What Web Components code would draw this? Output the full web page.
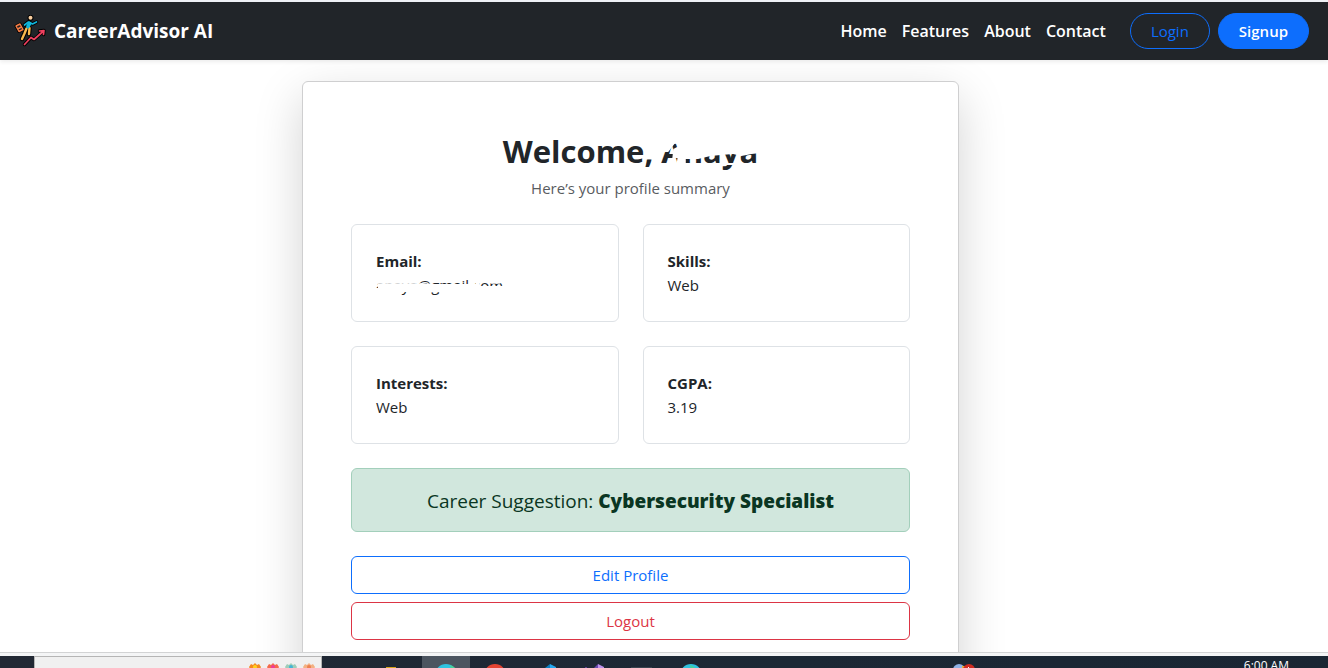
<!DOCTYPE html>
<html lang="en">
<head>
<meta charset="utf-8">
<title>CareerAdvisor AI</title>
<style>
html, body { margin: 0; height: 100%; }
body { display: flex; flex-direction: column; overflow: hidden; background: #fff; color: #212529; font: 15px/24px "Open Sans", "Noto Sans", sans-serif; }
main { flex: 1; min-height: 0; overflow: hidden; padding: 21px 67px 0 0; }
</style>
</head>
<body>
<site-nav>
  <nav-link href="#home">Home</nav-link>
  <nav-link href="#features">Features</nav-link>
  <nav-link href="#about">About</nav-link>
  <nav-link href="#contact">Contact</nav-link>
  <pill-button slot="actions">Login</pill-button>
  <pill-button slot="actions" solid>Signup</pill-button>
</site-nav>
<main>
  <profile-card>
    <info-box label="Email:"><redacted-text kind="email">anaya@gmail.com</redacted-text></info-box>
    <info-box label="Skills:">Web</info-box>
    <info-box label="Interests:">Web</info-box>
    <info-box label="CGPA:">3.19</info-box>
    <career-alert slot="footer">Cybersecurity Specialist</career-alert>
    <block-button slot="footer">Edit Profile</block-button>
    <block-button slot="footer" danger>Logout</block-button>
  </profile-card>
</main>
<task-bar></task-bar>
<script>
function define(name, html) {
  customElements.define(name, class extends HTMLElement {
    constructor() {
      super();
      this.attachShadow({ mode: 'open' }).innerHTML = '<style>*{box-sizing:border-box}</style>' + html(this);
    }
  });
}

define('site-nav', () => `<style>
:host { display: block; flex: none; position: relative; z-index: 1; border-top: 2px solid #eef1f5; background: #212529; box-shadow: 0 2px 4px rgba(0,0,0,.075); }
nav { display: flex; align-items: center; height: 58px; padding: 0 19px 0 14px; }
.brand { display: flex; align-items: center; gap: 7px; color: #fff; font-size: 19px; font-weight: 700; line-height: 30px; text-decoration: none; white-space: nowrap; }
.links { display: flex; gap: 15px; margin-left: auto; }
.actions { display: flex; gap: 8px; margin-left: 24px; }
</style>
<nav>
  <a class="brand" href="#home">
    <svg width="33" height="32" viewBox="0 0 33 32" fill="none" stroke-linecap="round" stroke-linejoin="round">
      <g stroke="#000">
        <path stroke-width="3.500" d="M10.500 29.500l6.500-7 3 2 9.500-8.500M25.500 16l4.500-.5-.5 4"/>
        <path stroke-width="4.500" d="M12.500 13.500l-2 5-2.500 5.500M15.500 13l-.5 6"/>
        <path stroke-width="5" d="M15 8l-1 4"/>
        <path stroke-width="3.500" d="M10.500 10l4-3 4 2 4-2"/>
        <circle cx="16.500" cy="2.800" r="2" stroke-width="2"/>
        <path stroke-width="3" d="M2 11l4-2 3 5.500-4 2z"/>
      </g>
      <path stroke="#ef405f" stroke-width="1.700" d="M10.500 29.500l6.500-7 3 2 9.500-8.500M25.500 16l4.500-.5-.5 4"/>
      <path fill="#231f20" stroke="#f47c45" stroke-width="1.400" d="M2 11l4-2 3 5.500-4 2zM4.500 13.500l3-1.500"/>
      <path stroke="#f8b84e" stroke-width="2.400" d="M12.500 13.500l-2 5-2.500 5.500M15.500 13l-.5 6"/>
      <path stroke="#10b5db" stroke-width="3.800" d="M15.500 8.500l-1.500 3"/>
      <path stroke="#10b5db" stroke-width="1.700" d="M10.500 10l4-3 4 2 4-2"/>
      <circle cx="16.500" cy="2.800" r="2" fill="#fbd0a0"/>
    </svg>
    <span>CareerAdvisor AI</span>
  </a>
  <div class="links"><slot></slot></div>
  <div class="actions"><slot name="actions"></slot></div>
</nav>`);

define('nav-link', el => `<style>
:host { display: block; }
a { color: #fff; font-size: 16px; font-weight: 600; line-height: 24px; text-decoration: none; }
</style><a href="${el.getAttribute('href')}"><slot></slot></a>`);

define('pill-button', el => `<style>
:host { display: block; }
button { display: block; height: 36px; padding: 0 20px; border: 1px solid #0d6efd; border-radius: 18px; background: transparent; color: #0d6efd; font: inherit; }
.solid { background: #0d6efd; color: #fff; font-weight: 600; }
</style><button class="${el.hasAttribute('solid') ? 'solid' : ''}"><slot></slot></button>`);

define('profile-card', () => `<style>
:host { display: block; max-width: 657px; margin: 0 auto; padding: 48px; border: 1px solid #cfcfd0; border-radius: 6px; background: #fff; box-shadow: 0 16px 48px rgba(0,0,0,.175); box-sizing: border-box; }
h2 { margin: 0; padding: 2px 0 6px; font-size: 31px; font-weight: 700; line-height: 38px; text-align: center; }
p { margin: 0 0 24px; text-align: center; color: #595c5f; }
.grid { display: grid; grid-template-columns: 1fr 1fr; gap: 24px; margin-bottom: 24px; }
.footer { display: flex; flex-direction: column; gap: 8px; }
</style>
<h2>Welcome, <redacted-text kind="name">Anaya</redacted-text></h2>
<p>Here’s your profile summary</p>
<div class="grid"><slot></slot></div>
<div class="footer"><slot name="footer"></slot></div>`);

define('info-box', el => `<style>
:host { display: block; padding: 24px; border: 1px solid #dee2e6; border-radius: 6px; box-sizing: border-box; }
strong { display: block; font-weight: 700; }
</style><strong>${el.getAttribute('label')}</strong><slot></slot>`);

/* Text with an eraser smear laid over it. */
define('redacted-text', el => `<style>
:host { display: inline-block; position: relative; }
svg { position: absolute; inset: 0; width: 100%; height: 100%; overflow: visible; }
</style><slot></slot>` + (el.getAttribute('kind') === 'email'
  ? `<svg viewBox="0 0 130 24" preserveAspectRatio="none" fill="#fff">
      <path d="M-1 2h42v9H-1z" opacity=".8"/>
      <path d="M2 11h40l4-1 14 1h42v-9h4v11h26v7H70l-8-1-12 1H40l-6-1H2z"/>
      <path d="M0 15h34v3H0z"/>
      <path d="M117 2h10v9h-10z" opacity=".7"/>
    </svg>`
  : `<svg viewBox="0 0 94 38" preserveAspectRatio="none" fill="#fff">
      <path d="M-1 4h21v6l-7 2-6 8h-8zM12 17l9-5 4 2v10l-4 2H11z"/>
      <path d="M20 4h76v17l-8 1-10 2-8-2-12 1-10 1-8 2-4 1H24v6h-9l1-7 6-3-2-8z"/>
      <path d="M60 31h16v2H60z"/>
      <path d="M12 11l12-3 8 4-10 2z" opacity=".7"/>
    </svg>`));

define('career-alert', () => `<style>
:host { display: block; margin-bottom: 16px; padding: 17px 16px 15px; border: 1px solid #a3cfbb; border-radius: 6px; background: #d1e7dd; color: #0a3622; font-size: 19px; font-weight: 500; line-height: 30px; text-align: center; box-sizing: border-box; }
strong { font-weight: 800; }
</style>Career Suggestion: <strong><slot></slot></strong>`);

define('block-button', el => `<style>
:host { display: block; }
button { display: block; width: 100%; height: 38px; padding: 0; border: 1px solid #0d6efd; border-radius: 6px; background: #fff; color: #0d6efd; font: inherit; }
.danger { border-color: #dc3545; color: #dc3545; }
</style><button class="${el.hasAttribute('danger') ? 'danger' : ''}"><slot></slot></button>`);

/* Desktop task bar: only its top edge is within the window. */
define('task-bar', () => {
  const flower = (a, b) => `<svg width="14" height="6"><path fill="${a}" d="M1 4l2-3 2 1 2-2 2 2 2-1 2 3-1 2H2z"/><circle cx="7" cy="4" r="2" fill="${b}"/></svg>`;
  const tile = (shape, cls = '') => `<span class="tile ${cls}"><svg width="48" height="12">${shape}</svg></span>`;
  const edge = '<circle cx="24" cy="19" r="11" fill="#2fc3e0"/><path fill="#49d39b" d="M28 9q7 2 8 9h-6z"/>';
  return `<style>
:host { display: block; flex: none; position: relative; z-index: 1; border-top: 1px solid #d2d3d4; background: #f4f5f6; padding-top: 3px; }
.bar { display: flex; height: 12px; overflow: hidden; padding-left: 34px; background: linear-gradient(90deg, #222834, #1c2835 60%, #1a2633); }
.search { display: flex; justify-content: flex-end; gap: 4px; width: 288px; padding: 6px 5px 0 0; border: 1px solid #b5b5b5; border-bottom: 0; background: #f0f0f0; }
.tiles { display: flex; margin-left: 52px; }
.tile { display: block; width: 48px; height: 12px; }
.active { background: #4c5560; }
.tray { margin-left: auto; margin-right: 268px; }
time { display: block; margin-right: 39px; padding-top: 2px; color: #fff; font-size: 12px; line-height: 16px; white-space: nowrap; }
svg { display: block; flex: none; }
</style>
<div class="bar">
  <div class="search">${flower('#f58a1f', '#ffd21f')}${flower('#f46a4a', '#ee3d96')}${flower('#9fcdb9', '#45b5d5')}${flower('#f3b183', '#ee8150')}</div>
  <div class="tiles">
    ${tile('<path fill="#d6a419" d="M12 11h10v1H12z"/>')}${tile(edge, 'active')}
    ${tile('<circle cx="25" cy="19" r="11" fill="#e44332"/>')}
    ${tile('<path fill="#0a7fc4" d="M27 12l5-4v4z"/><path fill="#22a7f0" d="M32 8l6 3v1h-6z"/>')}
    ${tile('<path fill="#6b4bae" d="M28 12l4-4v4z"/><path fill="#bd91ec" d="M32 8l6 3v1h-6z"/><path fill="#5b3e91" d="M19 11h2v1h-2z"/>')}
    ${tile('<path fill="#39434f" d="M17 11h21v1H17z"/>')}${tile(edge.replace('24', '29'))}
  </div>
  <svg class="tray" width="24" height="12"><circle cx="7" cy="14" r="6" fill="#8fb2e6"/><path fill="#e7b43a" d="M10 10h4v2h-4z"/><circle cx="17" cy="14" r="6" fill="#cf2a20"/><path fill="#fff" d="M16 11h1v1h-1z"/></svg>
  <time>6:00 AM</time>
</div>`;
});
</script>
</body>
</html>
